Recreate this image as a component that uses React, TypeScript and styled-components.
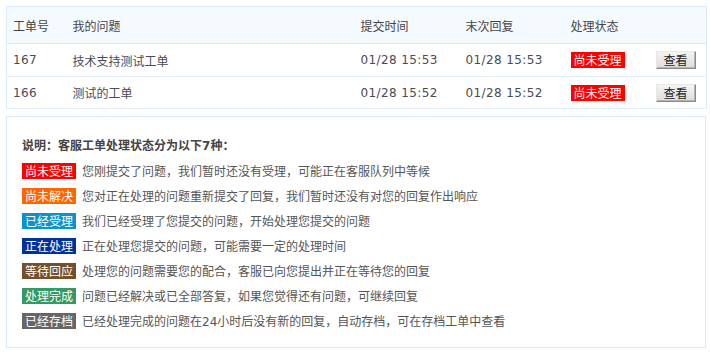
import React from "react";
import styled, { createGlobalStyle } from "styled-components";

const Global = createGlobalStyle`
  html, body { margin: 0; padding: 0; background: #ffffff; }
  body {
    font-family: "DejaVu Sans", "Noto Sans CJK SC", sans-serif;
    font-size: 12px;
    color: #444444;
  }
`;

const Page = styled.div`
  padding: 6px;
  display: flex;
  flex-direction: column;
  gap: 7px;
  width: 700px;
`;

const Table = styled.table`
  width: 700px;
  border-collapse: collapse;
  border: 1px solid #dbe9f8;
  table-layout: fixed;
`;

const HeadRow = styled.tr`
  background: #f5faff;
  height: 37px;
  border-bottom: 1px solid #dbe9f8;
`;

const Th = styled.th<{ $w: number }>`
  box-sizing: border-box;
  width: ${(p) => p.$w}px;
  text-align: left;
  font-weight: normal;
  padding: 0 0 0 6px;
  color: #444444;
  font-family: "Noto Sans CJK SC", sans-serif;
  font-size: 12px;
`;

const BodyRow = styled.tr<{ $h: number }>`
  height: ${(p) => p.$h}px;
  border-bottom: 1px solid #e4eef9;
`;

const Td = styled.td<{ $cjk?: boolean }>`
  box-sizing: border-box;
  padding: 0 0 0 6px;
  color: #4a4a55;
  font-family: ${(p) =>
    p.$cjk ? `"Noto Sans CJK SC", sans-serif` : `"DejaVu Sans", "Noto Sans CJK SC", sans-serif`};
  letter-spacing: ${(p) => (p.$cjk ? "0" : "0.4px")};
  font-size: 12px;
  white-space: nowrap;
`;

const Badge = styled.span<{ $bg: string }>`
  display: inline-block;
  background: ${(p) => p.$bg};
  color: #ffffff;
  font-family: "Noto Sans CJK SC", sans-serif;
  font-size: 12px;
  line-height: 16px;
  height: 16px;
  padding: 0 3px;
  letter-spacing: 0;
  white-space: nowrap;
`;

const ViewButton = styled.button`
  width: 40px;
  height: 18px;
  padding: 0;
  font-family: "Noto Sans CJK SC", sans-serif;
  font-size: 12px;
  line-height: 14px;
  letter-spacing: 0;
  color: #222222;
  background: linear-gradient(#f4f4f4, #dcdcdc);
  border: 1px solid;
  border-color: #e8e8e8 #8a8a8a #8a8a8a #e8e8e8;
  box-shadow: inset -1px -1px 0 #b5b5b5;
  cursor: pointer;
  vertical-align: middle;
`;

const InfoBox = styled.div`
  border: 1px solid #dbe9f8;
  padding: 16px 0 0 15px;
  width: 683px;
  height: 214px;
  display: flex;
  flex-direction: column;
`;

const Title = styled.div`
  font-family: "Noto Sans CJK SC", sans-serif;
  font-weight: bold;
  font-size: 12px;
  line-height: 24px;
  color: #444444;
`;

const Num = styled.span`
  font-family: "DejaVu Sans", sans-serif;
`;

const InfoRow = styled.div`
  display: flex;
  align-items: center;
  gap: 6px;
  height: 25px;
  font-family: "Noto Sans CJK SC", sans-serif;
  font-size: 12px;
  color: #555555;
`;

const tickets = [
  { id: "167", title: "技术支持测试工单", sub: "01/28 15:53", last: "01/28 15:53", h: 33 },
  { id: "166", title: "测试的工单", sub: "01/28 15:52", last: "01/28 15:52", h: 32 },
];

const statuses: { label: string; bg: string; text: React.ReactNode }[] = [
  { label: "尚未受理", bg: "#ff0000", text: "您刚提交了问题，我们暂时还没有受理，可能正在客服队列中等候" },
  { label: "尚未解决", bg: "#ff6600", text: "您对正在处理的问题重新提交了回复，我们暂时还没有对您的回复作出响应" },
  { label: "已经受理", bg: "#0b93cf", text: "我们已经受理了您提交的问题，开始处理您提交的问题" },
  { label: "正在处理", bg: "#003399", text: "正在处理您提交的问题，可能需要一定的处理时间" },
  { label: "等待回应", bg: "#744f2c", text: "处理您的问题需要您的配合，客服已向您提出并正在等待您的回复" },
  { label: "处理完成", bg: "#339966", text: "问题已经解决或已全部答复，如果您觉得还有问题，可继续回复" },
  {
    label: "已经存档",
    bg: "#666666",
    text: (
      <>
        已经处理完成的问题在<Num>24</Num>小时后没有新的回复，自动存档，可在存档工单中查看
      </>
    ),
  },
];

export default function App() {
  return (
    <>
      <Global />
      <Page>
        <Table>
          <thead>
            <HeadRow>
              <Th $w={60}>工单号</Th>
              <Th $w={288}>我的问题</Th>
              <Th $w={105}>提交时间</Th>
              <Th $w={105}>末次回复</Th>
              <Th $w={85}>处理状态</Th>
              <Th $w={57}></Th>
            </HeadRow>
          </thead>
          <tbody>
            {tickets.map((t) => (
              <BodyRow key={t.id} $h={t.h}>
                <Td>{t.id}</Td>
                <Td $cjk>{t.title}</Td>
                <Td>{t.sub}</Td>
                <Td>{t.last}</Td>
                <Td>
                  <Badge $bg="#ff0000">尚未受理</Badge>
                </Td>
                <Td>
                  <ViewButton>查看</ViewButton>
                </Td>
              </BodyRow>
            ))}
          </tbody>
        </Table>
        <InfoBox>
          <Title>
            说明：客服工单处理状态分为以下<Num>7</Num>种：
          </Title>
          {statuses.map((s) => (
            <InfoRow key={s.label}>
              <Badge $bg={s.bg}>{s.label}</Badge>
              <span>{s.text}</span>
            </InfoRow>
          ))}
        </InfoBox>
      </Page>
    </>
  );
}
